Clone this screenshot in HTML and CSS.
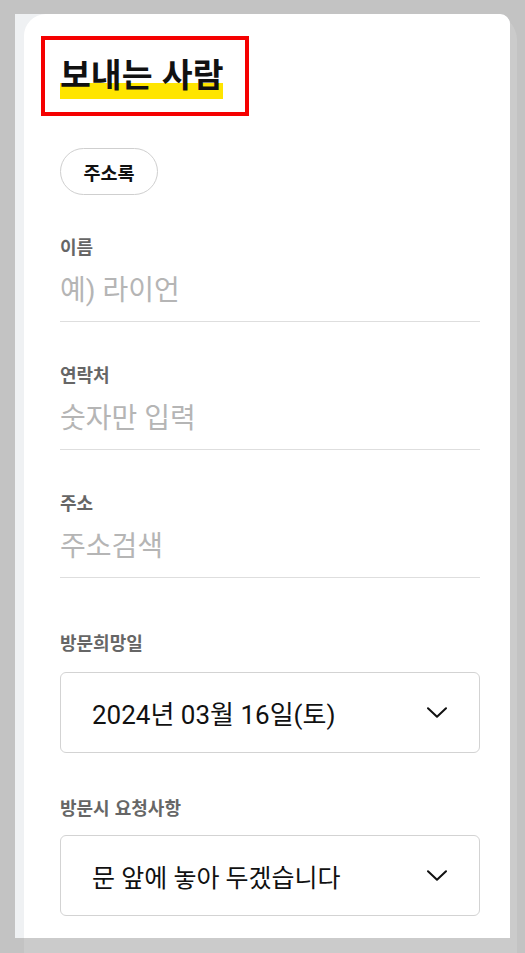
FILE: index.html
```html
<!DOCTYPE html>
<html lang="ko">
<head>
<meta charset="utf-8">
<title>보내는 사람</title>
<link rel="stylesheet" href="styles.css">
</head>
<body>
<div class="frame">
  <div class="sheet">
    <div class="card">
      <div class="title-box"><h1 class="title">보내는 사람</h1></div>
      <button class="pill" type="button">주소록</button>

      <div class="field">
        <div class="label">이름</div>
        <div class="input placeholder">예) 라이언</div>
      </div>
      <div class="field">
        <div class="label">연락처</div>
        <div class="input placeholder">숫자만 입력</div>
      </div>
      <div class="field">
        <div class="label">주소</div>
        <div class="input placeholder">주소검색</div>
      </div>

      <div class="group">
        <div class="label">방문희망일</div>
        <div class="select">
          <span class="select-text date">2024년 03월 16일(토)</span>
          <svg class="chev" width="20" height="11" viewBox="0 0 20 11"><path d="M1 1.2 L10 9.8 L19 1.2" fill="none" stroke="#111" stroke-width="2" stroke-linecap="round" stroke-linejoin="round"/></svg>
        </div>
      </div>
      <div class="group">
        <div class="label">방문시 요청사항</div>
        <div class="select">
          <span class="select-text">문 앞에 놓아 두겠습니다</span>
          <svg class="chev" width="20" height="11" viewBox="0 0 20 11"><path d="M1 1.2 L10 9.8 L19 1.2" fill="none" stroke="#111" stroke-width="2" stroke-linecap="round" stroke-linejoin="round"/></svg>
        </div>
      </div>
    </div>
  </div>
</div>
</body>
</html>
```
FILE: styles.css
```css
html, body {
  margin: 0;
  padding: 0;
  height: 953px;
  overflow: hidden;
  background: #c3c3c3;
  font-family: Roboto, "Noto Sans CJK KR", sans-serif;
}

.frame {
  margin: 14px 0 0 24px;
  width: 493px;
  height: 965px;
  background: #cbcbcb;
  border-radius: 26px;
}

.sheet {
  margin-left: -9px;
  width: 495px;
  height: 924px;
  box-sizing: border-box;
  padding-left: 9px;
  background: #eff1f3;
  border-top-right-radius: 10px;
  overflow: hidden;
}

.card {
  height: 100%;
  box-sizing: border-box;
  background: #fff;
  border-top-left-radius: 22px;
  border-top-right-radius: 10px;
  padding: 22px 30px 0 36px;
}

.title-box {
  display: inline-block;
  margin-left: -19px;
  border: 4px solid #f50000;
  padding: 19px 22px 13px 15px;
}

.title {
  display: inline-block;
  vertical-align: top;
  margin: 0;
  padding-bottom: 12px;
  font-family: "Noto Sans CJK KR", sans-serif;
  font-size: 33.5px;
  font-weight: 700;
  line-height: 28px;
  color: #111;
  background: linear-gradient(to bottom, transparent 24px, #ffe500 24px, #ffe500 40px, transparent 40px);
}

.pill {
  display: block;
  margin-top: 32px;
  width: 98px;
  height: 47px;
  border: 1px solid #cfcfcf;
  border-radius: 24px;
  background: #fff;
  font-family: "Noto Sans CJK KR", sans-serif;
  font-size: 18.5px;
  font-weight: 700;
  color: #111;
  padding: 0;
}

.label {
  font-family: "Noto Sans CJK KR", sans-serif;
  font-size: 18px;
  font-weight: 700;
  line-height: 22px;
  color: #666;
}

.field {
  margin-top: 40px;
}
.field + .field {
  margin-top: 41px;
}

.input {
  margin-top: 12px;
  height: 53px;
  box-sizing: border-box;
  border-bottom: 1px solid #dedede;
  font-size: 28px;
  line-height: 44px;
}

.placeholder {
  color: #b5b5b5;
}

.group {
  margin-top: 53px;
}
.group + .group {
  margin-top: 43px;
}

.select {
  margin-top: 19px;
  height: 81px;
  box-sizing: border-box;
  border: 1px solid #d3d3d3;
  border-radius: 6px;
  display: flex;
  align-items: center;
  justify-content: space-between;
  padding: 0 32px 0 31px;
}
.group + .group .select {
  margin-top: 17px;
}

.select-text {
  font-size: 25px;
  color: #111;
}
.select-text.date {
  font-size: 26px;
}

.chev {
  display: block;
}
```
